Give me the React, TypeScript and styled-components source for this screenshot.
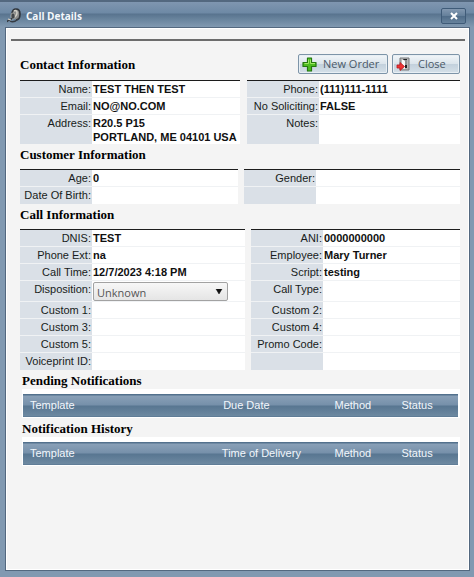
import React from "react";
import styled, { createGlobalStyle } from "styled-components";

const GlobalStyle = createGlobalStyle`
  * { box-sizing: border-box; }
  body {
    margin: 0;
    font-family: "Liberation Sans", Arial, sans-serif;
    font-size: 11px;
    line-height: 14px;
    color: #181c20;
  }
`;

const Window = styled.div`
  display: flex;
  flex-direction: column;
  min-height: 100vh;
  padding: 0 4px 6px 5px;
  background: #8199b1;
`;

const TitleBar = styled.header`
  display: flex;
  align-items: center;
  gap: 5px;
  height: 27px;
  margin: 0 -4px 0 -5px;
  padding: 4px 8px 0 7px;
  background: linear-gradient(#53687f 0 2px, #7f96b0 2px, #6e89a5 13px, #58738e 14px, #6b869f 20px, #8199b1);
`;

const Title = styled.h1`
  flex: 1;
  margin: 0;
  font: bold 10px/14px "Open Sans", sans-serif;
  color: #f4f8fc;
`;

const TitleClose = styled.button`
  display: grid;
  place-items: center;
  width: 25px;
  height: 16px;
  padding: 0;
  border: 1px solid #3f5b78;
  border-radius: 2px;
  background: linear-gradient(#8298b0, #647f9a 50%, #506c88 51%, #66829c);
`;

const Body = styled.main`
  flex: 1;
  padding: 11px 9px 10px 14px;
  border: 1px solid #53687f;
  box-shadow: inset 0 0 0 1px #ffffff;
  background: #f4f4f4;
`;

const Rule = styled.hr`
  height: 2px;
  margin: 0 -5px 13px -9px;
  border: 0;
  background: #6c6c6c;
`;

const HeadingRow = styled.div`
  display: flex;
  align-items: center;
  height: 20px;
  margin-bottom: 6px;
`;

const Heading = styled.h2`
  flex: 1;
  margin: 0;
  font: bold 13px/15px "Liberation Serif", "Times New Roman", serif;
  color: #000;
`;

const SectionHeading = styled(Heading)<{ $tight?: boolean }>`
  margin: 3px 0 ${(p) => (p.$tight ? 1 : 7)}px;
`;

const Toolbar = styled.div`
  display: flex;
  gap: 4px;
`;

const ToolButton = styled.button<{ $wide?: boolean }>`
  display: flex;
  align-items: center;
  gap: ${(p) => (p.$wide ? 6 : 8)}px;
  width: ${(p) => (p.$wide ? 90 : 68)}px;
  height: 20px;
  padding: 0 3px;
  border: 1px solid #7d94a8;
  border-radius: 2px;
  background: linear-gradient(#f2f6f9, #dbe4eb 49%, #c2d0dc 50%, #d5e0e8);
  box-shadow: inset 0 0 0 1px #e8eff4;
  font: 11px/14px "Open Sans", sans-serif;
  color: #4b5968;
  white-space: nowrap;
`;

const Columns = styled.div<{ $left: number; $right: number; $gap: number }>`
  display: grid;
  grid-template-columns: ${(p) => p.$left}fr ${(p) => p.$right}fr;
  align-items: start;
  gap: ${(p) => p.$gap}px;
`;

const FieldTable = styled.table`
  width: 100%;
  table-layout: fixed;
  border-collapse: separate;
  border-spacing: 0;
  border-top: 1px solid #1c1c1c;
  background: #fff;
`;

const FieldRow = styled.tr<{ $height: number }>`
  height: ${(p) => p.$height}px;
  & > * { border-bottom: 1px solid #f0f2f4; }
  &:last-child > * { border-bottom: 0; }
`;

const FieldLabel = styled.th`
  width: 72px;
  padding: 1px 1px 0 0;
  background: #dae0e7;
  font-weight: normal;
  text-align: right;
  vertical-align: top;
  white-space: nowrap;
`;

const FieldValue = styled.td`
  padding: 1px 0 0 1px;
  font-weight: bold;
  vertical-align: top;
  white-space: pre;
  color: #101010;
`;

const SelectBox = styled.div`
  position: relative;
  width: 135px;
  height: 19px;
  svg {
    position: absolute;
    top: 7px;
    right: 5px;
    pointer-events: none;
  }
`;

const Select = styled.select`
  appearance: none;
  display: block;
  width: 100%;
  height: 100%;
  padding: 2px 18px 0 3px;
  border: 1px solid #a2a2a2;
  border-radius: 2px;
  background: linear-gradient(#f7f7f7, #e5e5e5);
  font: 11px/15px "Open Sans", sans-serif;
  color: #555;
`;

const NotificationArea = styled.section`
  padding-left: 2px;
`;

const GridPanel = styled.div`
  padding: 5px 2px 1px 1px;
  background: #fff;
`;

const GridTable = styled.table<{ $date: string; $delivery: string }>`
  width: 100%;
  table-layout: fixed;
  border-spacing: 0;
  background: linear-gradient(#53718d 0 1px, #89a0b7 2px, #7690aa 11px, #587691 12px, #6d89a1 22px, #53718d);
  th {
    height: 23px;
    padding: 0 0 1px 7px;
    font-weight: normal;
    text-align: left;
    white-space: nowrap;
    color: #f2f7fc;
  }
  th:nth-child(1) { width: ${(p) => p.$date}; }
  th:nth-child(2) { width: ${(p) => p.$delivery}; }
  th:nth-child(3) { width: 15.4%; }
`;

type Field = { label: string; value?: string; options?: string[]; height?: number };

function Fields({ name, fields }: { name: string; fields: Field[] }) {
  return (
    <FieldTable aria-label={name}>
      <tbody>
        {fields.map((f, i) => (
          <FieldRow key={i} $height={f.height ?? 17}>
            <FieldLabel scope="row">
              {f.options ? <label htmlFor="disposition">{f.label}</label> : f.label}
            </FieldLabel>
            <FieldValue>
              {f.options ? (
                <SelectBox>
                  <Select id="disposition" defaultValue={f.options[0]}>
                    {f.options.map((o) => <option key={o}>{o}</option>)}
                  </Select>
                  <svg width="8" height="5" viewBox="0 0 8 5" aria-hidden="true">
                    <path d="M1 0h6L4 5z" fill="#111" stroke="#111" strokeWidth=".5" />
                  </svg>
                </SelectBox>
              ) : f.value}
            </FieldValue>
          </FieldRow>
        ))}
      </tbody>
    </FieldTable>
  );
}

type NotificationsProps = { title: string; dateColumn: string; columns: [string, string] };

function Notifications({ title, dateColumn, columns }: NotificationsProps) {
  return (
    <NotificationArea>
      <SectionHeading $tight>{title}</SectionHeading>
      <GridPanel>
        <GridTable aria-label={title} $date={columns[0]} $delivery={columns[1]}>
          <thead>
            <tr>
              <th scope="col">Template</th>
              <th scope="col">{dateColumn}</th>
              <th scope="col">Method</th>
              <th scope="col">Status</th>
            </tr>
          </thead>
        </GridTable>
      </GridPanel>
    </NotificationArea>
  );
}

function HeadsetIcon() {
  return (
    <svg width="14" height="16" viewBox="0 0 14 16" aria-hidden="true">
      <path d="M5 6C5 2 7 1 9 1c3 0 4 2 4 5s-1 6-4 6" fill="#8b8c8b" stroke="#30353b" strokeWidth="1.6" />
      <path d="M7 3c2-1 3 0 3 2s-1 3-2 4" fill="none" stroke="#d2d0c8" strokeWidth="1.5" />
      <rect x="4" y="5" width="4" height="6" rx="2" fill="#42464a" stroke="#c2bfb5" strokeWidth=".7" />
      <path d="M5 10c-1 3-4 1-5 4m3-1c3 2 6 0 8-2" fill="none" stroke="#353b42" strokeWidth="1.5" />
      <path d="M1 11l3 1" stroke="#ddd6c9" strokeWidth="1.2" />
    </svg>
  );
}

function PlusIcon() {
  return (
    <svg width="15" height="15" viewBox="0 0 15 15" aria-hidden="true">
      <path d="M5.5 1h4v4.5H14v4H9.5V14h-4V9.5H1v-4h4.500z" fill="#4ebc20" stroke="#23780f" strokeWidth="1.2" strokeLinejoin="round" />
      <path d="M6.500 2.500v4h-4M8.500 2.500v4H13" fill="none" stroke="#a0e867" />
    </svg>
  );
}

function ExitIcon() {
  return (
    <svg width="14" height="14" viewBox="0 0 14 14" aria-hidden="true">
      <path d="M4 1h9v12H4z" fill="#b9b9b9" stroke="#77797b" />
      <path d="M6 2h5v9H6z" fill="#202326" />
      <path d="M6 2l3 1.500V12l-3-1z" fill="#f7f7f7" />
      <path d="M10 3v5" stroke="#fff" />
      <path d="M1 8h3V5.500L8.500 9.500 4 13.500V11H1z" fill="#ee3434" stroke="#bb1820" strokeWidth=".8" />
    </svg>
  );
}

export default function App() {
  return (
    <>
      <GlobalStyle />
      <Window>
        <TitleBar>
          <HeadsetIcon />
          <Title>Call Details</Title>
          <TitleClose aria-label="Close window">
            <svg width="8" height="8" viewBox="0 0 8 8" aria-hidden="true">
              <path d="M1 1l6 6M7 1L1 7" stroke="#fff" strokeWidth="2" />
            </svg>
          </TitleClose>
        </TitleBar>
        <Body>
          <Rule />
          <HeadingRow>
            <Heading>Contact Information</Heading>
            <Toolbar>
              <ToolButton $wide><PlusIcon />New Order</ToolButton>
              <ToolButton><ExitIcon />Close</ToolButton>
            </Toolbar>
          </HeadingRow>
          <Columns $left={220} $right={213} $gap={7}>
            <Fields name="Contact" fields={[
              { label: "Name:", value: "TEST THEN TEST" },
              { label: "Email:", value: "NO@NO.COM" },
              { label: "Address:", value: "R20.5 P15\nPORTLAND, ME 04101 USA", height: 29 },
            ]} />
            <Fields name="Contact preferences" fields={[
              { label: "Phone:", value: "(111)111-1111" },
              { label: "No Soliciting:", value: "FALSE" },
              { label: "Notes:", height: 29 },
            ]} />
          </Columns>
          <SectionHeading>Customer Information</SectionHeading>
          <Columns $left={218} $right={216} $gap={6}>
            <Fields name="Customer age" fields={[{ label: "Age:", value: "0" }, { label: "Date Of Birth:" }]} />
            <Fields name="Customer gender" fields={[{ label: "Gender:" }, { label: "" }]} />
          </Columns>
          <SectionHeading>Call Information</SectionHeading>
          <Columns $left={225} $right={209} $gap={6}>
            <Fields name="Call" fields={[
              { label: "DNIS:", value: "TEST" },
              { label: "Phone Ext:", value: "na" },
              { label: "Call Time:", value: "12/7/2023 4:18 PM" },
              { label: "Disposition:", options: ["Unknown"], height: 21 },
              { label: "Custom 1:" },
              { label: "Custom 3:" },
              { label: "Custom 5:" },
              { label: "Voiceprint ID:" },
            ]} />
            <Fields name="Call handling" fields={[
              { label: "ANI:", value: "0000000000" },
              { label: "Employee:", value: "Mary Turner" },
              { label: "Script:", value: "testing" },
              { label: "Call Type:", height: 21 },
              { label: "Custom 2:" },
              { label: "Custom 4:" },
              { label: "Promo Code:" },
              { label: "" },
            ]} />
          </Columns>
          <Notifications title="Pending Notifications" dateColumn="Due Date" columns={["44.4%", "25.6%"]} />
          <Notifications title="Notification History" dateColumn="Time of Delivery" columns={["44.1%", "25.9%"]} />
        </Body>
      </Window>
    </>
  );
}
